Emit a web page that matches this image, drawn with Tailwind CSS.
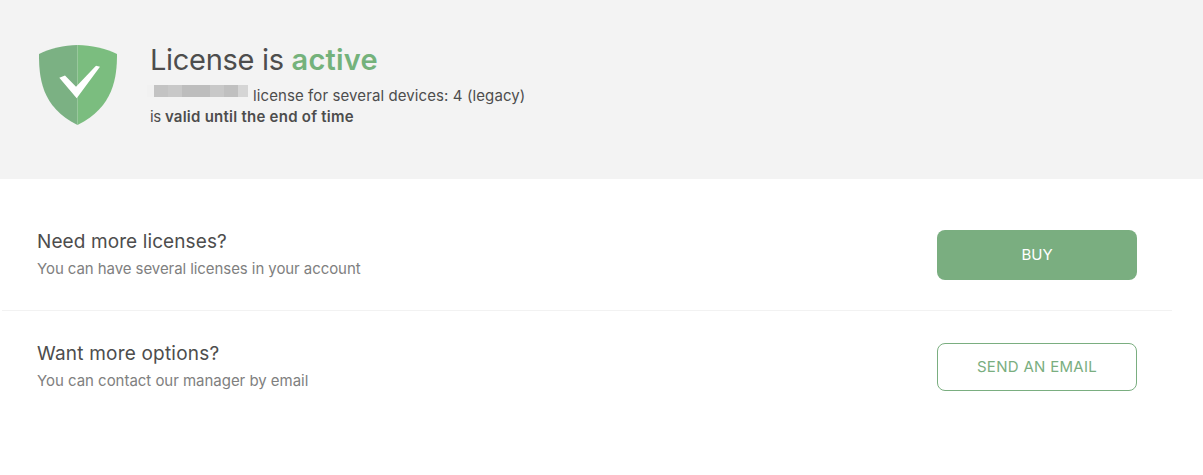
<!DOCTYPE html>
<html lang="en">
<head>
  <meta charset="UTF-8" />
  <title>License</title>
  <script src="https://cdn.jsdelivr.net/npm/@tailwindcss/browser@4"></script>
</head>
<body class="bg-white text-[#4d4d4d] font-['Inter',sans-serif] h-[475px] overflow-hidden">

  <!-- License status -->
  <section class="h-[179px] bg-[#f3f3f3] flex items-start pl-[39px] pt-[45px]">
    <svg class="w-[78px] h-[80px] shrink-0" viewBox="0 0 78 80">
      <path d="M38.5 0C25 0 11 3.5 0 9C0 32 2 62 38.5 80Z" fill="#7bb183"/>
      <path d="M38.5 0C52 0 67 3.5 78 9C78 32 75 62 38.5 80Z" fill="#7bbd7f"/>
      <path d="M20.3 32.7L26 30.6L37 41.7L57 20.7L61 21.7L37.7 53.3Z" fill="#fff"/>
    </svg>
    <div class="ml-[33px]">
      <h1 class="text-[29px] leading-[30px] tracking-[-0.3px]">License is <span class="font-semibold tracking-[0.2px] text-[#74b27b]">active</span></h1>
      <div class="flex items-start mt-[11px] text-[15px] leading-[20px] tracking-[0.1px]">
        <span class="flex h-[12px] -mt-[1px] -ml-[3px] mr-[5px]">
          <span class="w-[7px] bg-[#f1f1f1]"></span>
          <span class="w-[14px] bg-[#c3c3c3]"></span>
          <span class="w-[14px] bg-[#c8c8c8]"></span>
          <span class="w-[28px] bg-[#bdbdbd]"></span>
          <span class="w-[14px] bg-[#c8c8c8]"></span>
          <span class="w-[14px] bg-[#c0c0c0]"></span>
          <span class="w-[10px] bg-[#d5d5d5]"></span>
        </span>
        <span>license for several devices: 4 (legacy)</span>
      </div>
      <p class="text-[15px] leading-[20px] mt-[1px] tracking-[-0.3px]">is <b class="font-semibold tracking-[0.25px]">valid until the end of time</b></p>
    </div>
  </section>

  <!-- Need more licenses -->
  <section class="ml-[2px] w-[1170px] h-[132px] border-b border-[#f2f2f2] flex items-start justify-between px-[35px] pt-[51px]">
    <div>
      <h2 class="text-[19px] leading-[24px] tracking-[0.1px]">Need more licenses?</h2>
      <p class="text-[15px] leading-[20px] mt-[5px] tracking-[-0.07px] text-[#808080]">You can have several licenses in your account</p>
    </div>
    <button class="w-[200px] h-[50px] rounded-[8px] bg-[#7aae80] text-white text-[15px]">BUY</button>
  </section>

  <!-- Want more options -->
  <section class="ml-[2px] w-[1170px] flex items-start justify-between px-[35px] pt-[32px]">
    <div class="-mt-[1px]">
      <h2 class="text-[19px] leading-[24px] tracking-[0.2px]">Want more options?</h2>
      <p class="text-[15px] leading-[20px] mt-[5px] tracking-[-0.03px] text-[#808080]">You can contact our manager by email</p>
    </div>
    <button class="w-[200px] h-[48px] pt-[1px] rounded-[8px] border border-[#7aae80] text-[#7aae80] text-[15px] tracking-[0.3px]">SEND AN EMAIL</button>
  </section>

</body>
</html>
